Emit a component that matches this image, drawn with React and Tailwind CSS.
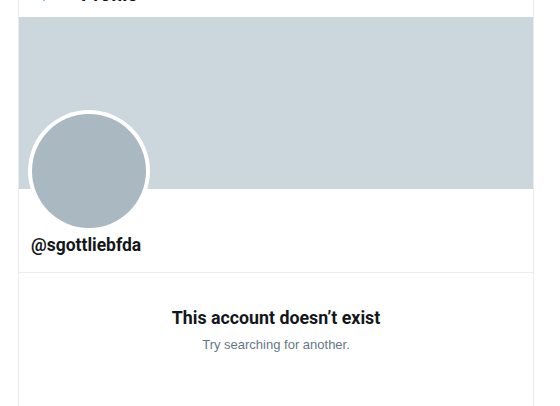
import React from "react";

export default function App() {
  return (
    <div className="w-[560px] h-[406px] bg-white overflow-hidden" style={{ fontFamily: "Roboto, 'Liberation Sans', Arial, sans-serif" }}>
      <div className="ml-[18px] w-[516px] h-[406px] border-x border-[#e6ecf0] flex flex-col">
        {/* header (cut off) */}
        <div className="h-[17px] overflow-hidden flex items-end">
          <div className="flex items-center gap-[26px] pl-[16px] mb-[10px] h-[24px]">
            <svg width="20" height="20" viewBox="0 0 24 24" className="text-[#1da1f2]">
              <path fill="currentColor" d="M20 11H7.414l4.293-4.293a1 1 0 0 0-1.414-1.414l-6 6a1 1 0 0 0 0 1.414l6 6a1 1 0 0 0 1.414-1.414L7.414 13H20a1 1 0 1 0 0-2z" />
            </svg>
            <span className="text-[19px] font-bold text-[#14171a] leading-[24px]">Profile</span>
          </div>
        </div>
        {/* banner */}
        <div className="h-[172px] bg-[#ccd6dd] shrink-0" />
        {/* avatar + name */}
        <div className="px-[9px] border-b border-[#e6ecf0] pb-[17px]">
          <div className="-mt-[79px] w-[122px] h-[122px] rounded-full bg-white p-[4px]">
            <div className="w-full h-full rounded-full bg-[#aab8c2]" />
          </div>
          <div className="mt-[3px] pl-[3px] text-[17.5px] leading-[20px] font-bold text-[#14171a]">@sgottliebfda</div>
        </div>
        {/* empty state */}
        <div className="flex flex-col items-center pt-[33px]">
          <div className="text-[17.8px] leading-[24px] font-bold text-[#14171a]">This account doesn’t exist</div>
          <div className="mt-[6px] text-[13px] leading-[18px] text-[#657786]" style={{ fontFamily: "'Liberation Sans', Arial, sans-serif" }}>Try searching for another.</div>
        </div>
      </div>
    </div>
  );
}
